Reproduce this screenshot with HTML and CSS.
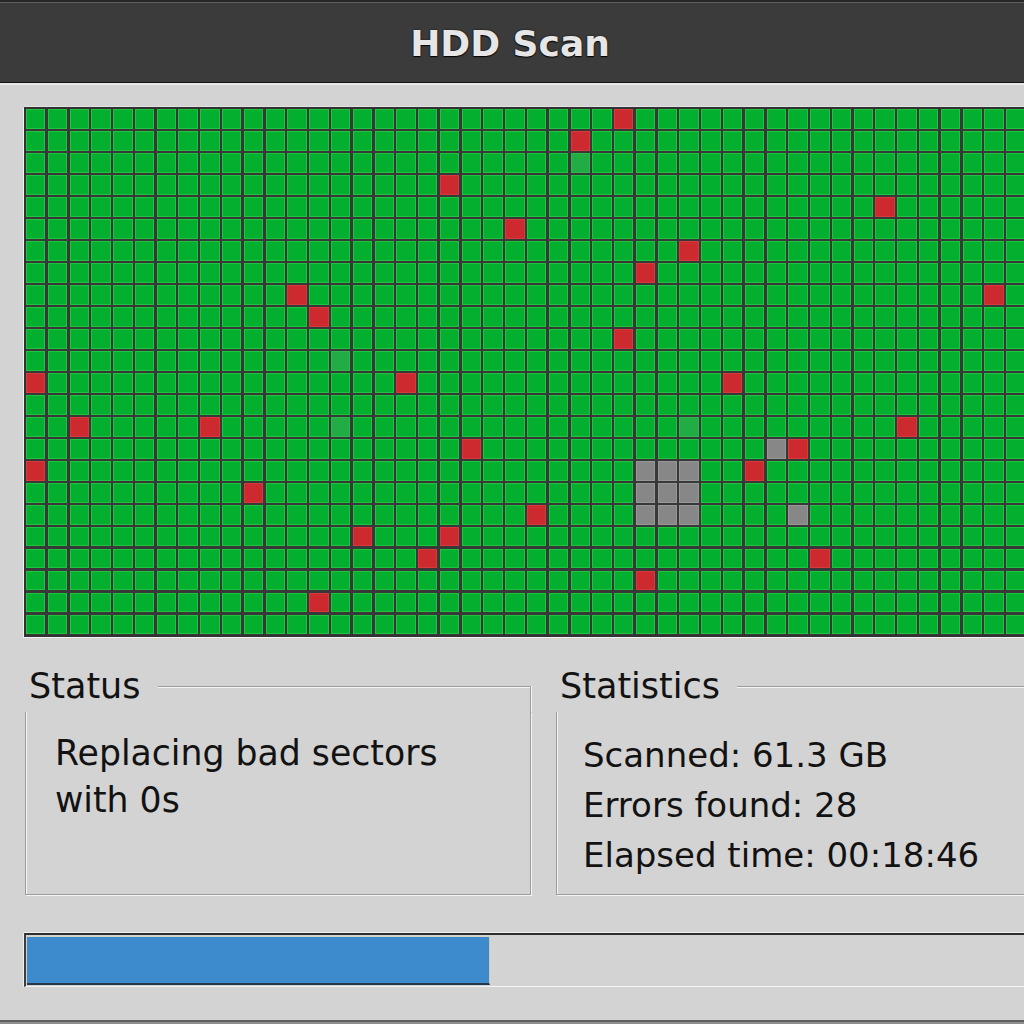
FILE: index.html
```html
<!DOCTYPE html>
<html lang="en">
<head>
<meta charset="utf-8">
<title>HDD Scan</title>
<link rel="stylesheet" href="styles.css">
</head>
<body>
<header class="titlebar">
  <h1 class="title">HDD Scan</h1>
</header>
<main class="window">
  <div class="sector-map" id="sector-map"></div>
  <div class="panels">
    <section class="group group-status">
      <div class="group-head">
        <span class="group-label">Status</span>
        <span class="group-rule"></span>
      </div>
      <div class="group-body">
        <p class="status-text">Replacing bad sectors<br>with 0s</p>
      </div>
    </section>
    <section class="group group-stats">
      <div class="group-head">
        <span class="group-label">Statistics</span>
        <span class="group-rule"></span>
      </div>
      <div class="group-body">
        <ul class="stats">
          <li>Scanned: 61.3 GB</li>
          <li>Errors found: 28</li>
          <li>Elapsed time: 00:18:46</li>
        </ul>
      </div>
    </section>
  </div>
  <div class="progress">
    <div class="progress-fill" style="width: 44.7%"></div>
  </div>
</main>
<script src="script.js"></script>
</body>
</html>
```
FILE: styles.css
```css
html {
  background: #8e8e8e;
}
body {
  margin: 0;
  width: 1024px;
  height: 1024px;
  overflow: hidden;
  font-family: "DejaVu Sans", "Liberation Sans", sans-serif;
  color: #121212;
  background: #8e8e8e;
}
.titlebar {
  height: 76px;
  padding-top: 4px;
  background: #3b3b3b;
  border-top: 2px solid #262626;
  border-bottom: 1px solid #121212;
  box-shadow: inset 0 1px 0 #5e5e5e, 0 2px 0 #e9e9e9;
  position: relative;
  z-index: 1;
}
.title {
  margin: 0;
  text-align: center;
  font-size: 36px;
  font-weight: bold;
  line-height: 76px;
  color: #e6e6e6;
  text-shadow: 0 0 2px #0c0c0c, 0 1px 1px #000;
  padding-right: 4px;
}
.window {
  width: 1039px;
  padding: 24px 24px 33px 24px;
  background: #d3d3d3;
  border-bottom: 2px solid #5f5f5f;
}
.sector-map {
  height: 526px;
  display: grid;
  grid-template-columns: repeat(48, 19.4px);
  grid-template-rows: repeat(24, 19.6px);
  gap: 2.4px;
  padding-top: 0.2px;
  background: #383838;
  border: 2px solid #323232;
  border-right: none;
  box-shadow: -1px 1px 0 #f2f2f2, 0 -1px 0 #e2e2e2;
  overflow: hidden;
}
.cell {
  background: #02af2e;
  box-shadow: inset 0 0 0 1px #1ec43f;
}
.cell.bad {
  background: #cc2a2f;
  box-shadow: inset 0 0 0 1px #d53a3c;
}
.cell.skip {
  background: #878787;
  box-shadow: inset 0 0 0 1px #979797;
}
.cell.dim {
  background: #22ac44;
  box-shadow: inset 0 0 0 1px #2fb84e;
}
.panels {
  display: flex;
  gap: 25px;
  margin-top: 29px;
  margin-left: 1px;
}
.group-status {
  width: 506px;
}
.group-stats {
  flex: 1;
}
.group-head {
  display: flex;
  height: 46px;
}
.group-label {
  font-size: 35px;
  line-height: 40px;
  padding-left: 4px;
  padding-right: 17px;
}
.group-rule {
  flex: 1;
  margin-top: 20px;
  border-top: 1px solid #9c9c9c;
  border-right: 1px solid #9c9c9c;
  box-shadow: inset 0 1px 0 #f4f4f4, 1px 0 0 #f4f4f4;
}
.group-body {
  box-sizing: border-box;
  height: 183px;
  padding-top: 18px;
  border: 1px solid #9c9c9c;
  border-top: none;
  box-shadow: inset 1px 0 0 #f4f4f4, 1px 1px 0 #f4f4f4;
  font-size: 35px;
}
.group-status .group-body {
  padding-left: 29px;
}
.group-stats .group-body {
  padding-left: 26px;
  font-size: 34px;
}
.status-text {
  margin: 0;
  font-size: 34.7px;
  line-height: 47px;
}
.stats {
  list-style: none;
  margin: 0;
  padding: 0;
  line-height: 50px;
}
.progress {
  margin-top: 38px;
  height: 50px;
  padding: 1px 0 0 1px;
  border-top: 2px solid #2e2e2e;
  border-left: 2px solid #3c3c3c;
  border-bottom: 1px solid #f4f4f4;
  box-shadow: 0 -1px 0 #f0f0f0, -1px 0 0 #f0f0f0;
  background: #d3d3d3;
}
.progress-fill {
  box-sizing: border-box;
  height: 49px;
  background: #3d8bcc;
  border-top: 1px solid #d9d3c2;
  border-right: 1px solid #cfc8b4;
  border-bottom: 2px solid #25384b;
}
```
FILE: script.js
```js
(function () {
  var ROWS = 24, COLS = 48;
  var bad = [
    [0,27],[1,25],[3,19],[4,39],[5,22],[6,30],[7,28],[8,12],[8,44],[9,13],
    [10,27],[12,0],[12,17],[12,32],[14,2],[14,8],[14,40],[15,20],[15,35],
    [16,0],[16,33],[17,10],[18,23],[19,15],[19,19],[20,18],[20,36],[21,28],[22,13]
  ];
  var skip = [
    [15,34],[16,28],[16,29],[16,30],[17,28],[17,29],[17,30],
    [18,28],[18,29],[18,30],[18,35]
  ];
  var dim = [[2,25],[11,14],[14,14],[14,30]];
  function key(p) { return p[0] + ':' + p[1]; }
  var kind = {};
  dim.forEach(function (p) { kind[key(p)] = 'dim'; });
  skip.forEach(function (p) { kind[key(p)] = 'skip'; });
  bad.forEach(function (p) { kind[key(p)] = 'bad'; });
  var map = document.getElementById('sector-map');
  var frag = document.createDocumentFragment();
  for (var r = 0; r < ROWS; r++) {
    for (var c = 0; c < COLS; c++) {
      var d = document.createElement('div');
      var k = kind[r + ':' + c];
      d.className = k ? 'cell ' + k : 'cell';
      frag.appendChild(d);
    }
  }
  map.appendChild(frag);
})();
```
